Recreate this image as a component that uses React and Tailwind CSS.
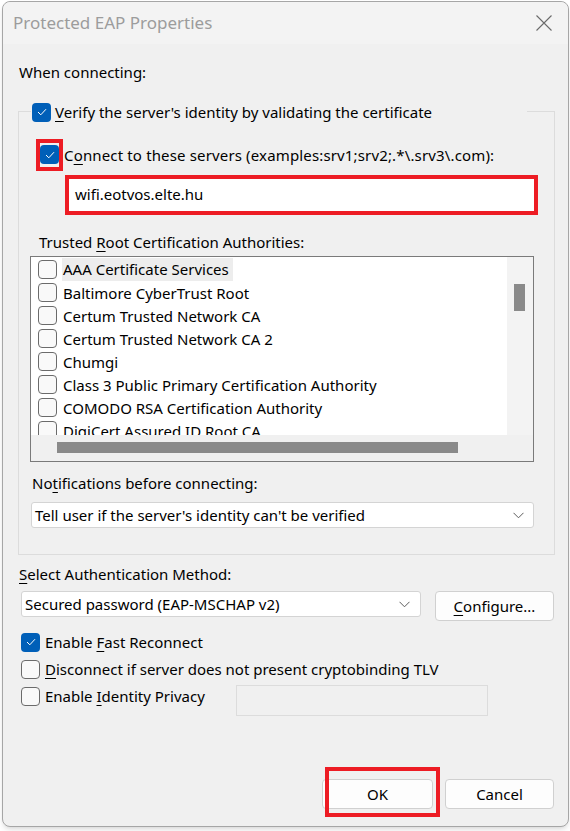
const certs = [
    'AAA Certificate Services',
    'Baltimore CyberTrust Root',
    'Certum Trusted Network CA',
    'Certum Trusted Network CA 2',
    'Chumgi',
    'Class 3 Public Primary Certification Authority',
    'COMODO RSA Certification Authority',
    'DigiCert Assured ID Root CA',
];

function Check({ checked }) {
    if (checked) {
        return (
            <span className="flex h-[19px] w-[19px] shrink-0 items-center justify-center rounded-[4px] bg-[#005fb8]">
                <svg width="10" height="8" viewBox="0 0 10 8">
                    <path d="M1 4 L3.8 6.8 L9 1.2" fill="none" stroke="white" strokeWidth="1" />
                </svg>
            </span>
        );
    }
    return <span className="h-[19px] w-[19px] shrink-0 rounded-[4px] border border-[#6b6b6b] bg-[#f9f9f9]" />;
}

function Chevron() {
    return (
        <svg width="11" height="7" viewBox="0 0 11 7">
            <path d="M0.5 0.8 L5.5 5.8 L10.5 0.8" fill="none" stroke="#5c5c5c" strokeWidth="1" />
        </svg>
    );
}

function U({ children }) {
    return <span className="underline decoration-1 underline-offset-[3px]">{children}</span>;
}

export default function App() {
    return (
        <div className="h-[831px] w-[570px] overflow-hidden bg-white pl-[2px] pt-[1px] font-['Noto_Sans',sans-serif] text-[15px] leading-[20px] text-black">
            <div className="flex h-[826px] w-[567px] flex-col rounded-[8px] border border-[#a6a6a6] bg-[#f0f0f0] shadow-md">
                {/* title bar */}
                <div className="flex h-[42px] shrink-0 items-center justify-between rounded-t-[8px] bg-[#f3f3f3] pl-[10px] pr-[16px]">
                    <span className="text-[17px] text-[#9c9c9c]">Protected EAP Properties</span>
                    <svg width="16" height="16" viewBox="0 0 16 16">
                        <path d="M0.5 0.5 L15.5 15.5 M15.5 0.5 L0.5 15.5" fill="none" stroke="#6a6a6a" strokeWidth="1.1" />
                    </svg>
                </div>

                <div className="flex flex-1 flex-col pl-[15px]">
                    <div className="mt-[18px] pl-[1px]">When connecting:</div>

                    {/* group box */}
                    <div className="mt-[29px] mr-[13px] border border-[#dcdcdc] pb-[26px]">
                        <div className="-mt-[10px] ml-[12px] flex w-[496px] items-center gap-[4px] bg-[#f0f0f0] pl-[1px]">
                            <Check checked />
                            <span>
                                <U>V</U>erify the server's identity by validating the certificate
                            </span>
                        </div>

                        <div className="mt-[17px] ml-[17px] flex items-center gap-[1px]">
                            <span className="border-[4px] border-[#ed1c24] pt-[2px] pb-[3px]">
                                <Check checked />
                            </span>
                            <span className="tracking-[0.15px]">
                                C<U>o</U>nnect to these servers (examples:srv1;srv2;.*\.srv3\.com):
                            </span>
                        </div>

                        <div className="mt-[4px] ml-[46px] flex h-[40px] w-[473px] items-center border-[4px] border-[#ed1c24] bg-white pb-[3px] pl-[6px]">
                            wifi.eotvos.elte.hu
                        </div>

                        <div className="mt-[17px] ml-[20px]">
                            Trusted <U>R</U>oot Certification Authorities:
                        </div>

                        {/* certificate list */}
                        <div className="mt-[4px] ml-[11px] grid h-[206px] w-[504px] grid-cols-[476px_26px] grid-rows-[178px_26px] border border-[#7a7a7a]">
                            <div className="overflow-hidden bg-white pt-[1px]">
                                {certs.map((c, i) => (
                                    <div key={c} className="flex h-[23px] items-center gap-[5px] pl-[7px]">
                                        <Check />
                                        <span className={i === 0 ? 'bg-[#ededed] pl-[1px] pr-[4px] leading-[23px]' : 'pl-[1px]'}>{c}</span>
                                    </div>
                                ))}
                            </div>
                            <div className="bg-[#f3f3f3] pt-[27px] pl-[7px]">
                                <div className="h-[27px] w-[11px] bg-[#8a8a8a]" />
                            </div>
                            <div className="bg-[#f0f0f0] pt-[7px] pl-[26px]">
                                <div className="h-[11px] w-[401px] bg-[#8a8a8a]" />
                            </div>
                            <div className="bg-[#f0f0f0]" />
                        </div>

                        <div className="mt-[11px] ml-[13px]">
                            No<U>t</U>ifications before connecting:
                        </div>
                        <div className="mt-[9px] ml-[12px] flex h-[26px] w-[503px] items-center justify-between rounded-[3px] border border-[#d4d4d4] bg-white pl-[3px] pr-[9px]">
                            <span>Tell user if the server's identity can't be verified</span>
                            <Chevron />
                        </div>
                    </div>

                    <div className="mt-[9px] pl-[1px]">
                        <U>S</U>elect Authentication Method:
                    </div>
                    <div className="mt-[7px] flex items-start gap-[14px] pl-[3px]">
                        <div className="flex h-[26px] w-[400px] items-center justify-between rounded-[3px] border border-[#d4d4d4] bg-white pl-[3px] pr-[10px]">
                            <span>Secured password (EAP-MSCHAP v2)</span>
                            <Chevron />
                        </div>
                        <div className="flex h-[30px] w-[119px] items-center justify-center rounded-[4px] border border-[#d0d0d0] bg-[#fdfdfd]">
                            <span>
                                <U>C</U>onfigure...
                            </span>
                        </div>
                    </div>

                    <div className="mt-[11px] flex flex-col gap-[7px] pl-[3px]">
                        <div className="flex items-center gap-[5px]">
                            <Check checked />
                            <span>
                                Enable <U>F</U>ast Reconnect
                            </span>
                        </div>
                        <div className="flex items-center gap-[5px]">
                            <Check />
                            <span>
                                <U>D</U>isconnect if server does not present cryptobinding TLV
                            </span>
                        </div>
                        <div className="flex items-start">
                            <div className="flex w-[215px] items-center gap-[5px]">
                                <Check />
                                <span>
                                    Enable <U>I</U>dentity Privacy
                                </span>
                            </div>
                            <div className="-mt-[1px] h-[31px] w-[252px] border border-[#dcdcdc]" />
                        </div>
                    </div>

                    <div className="mt-auto mb-[17px] mr-[14px] flex justify-end gap-[12px]">
                        <div className="relative flex h-[30px] w-[111px] items-center justify-center rounded-[4px] border border-[#d0d0d0] bg-[#fdfdfd]">
                            OK
                            <span className="absolute left-[2px] -top-[13px] h-[50px] w-[115px] border-[4px] border-[#ed1c24]" />
                        </div>
                        <div className="flex h-[30px] w-[109px] items-center justify-center rounded-[4px] border border-[#d0d0d0] bg-[#fdfdfd]">
                            Cancel
                        </div>
                    </div>
                </div>
            </div>
        </div>
    );
}
